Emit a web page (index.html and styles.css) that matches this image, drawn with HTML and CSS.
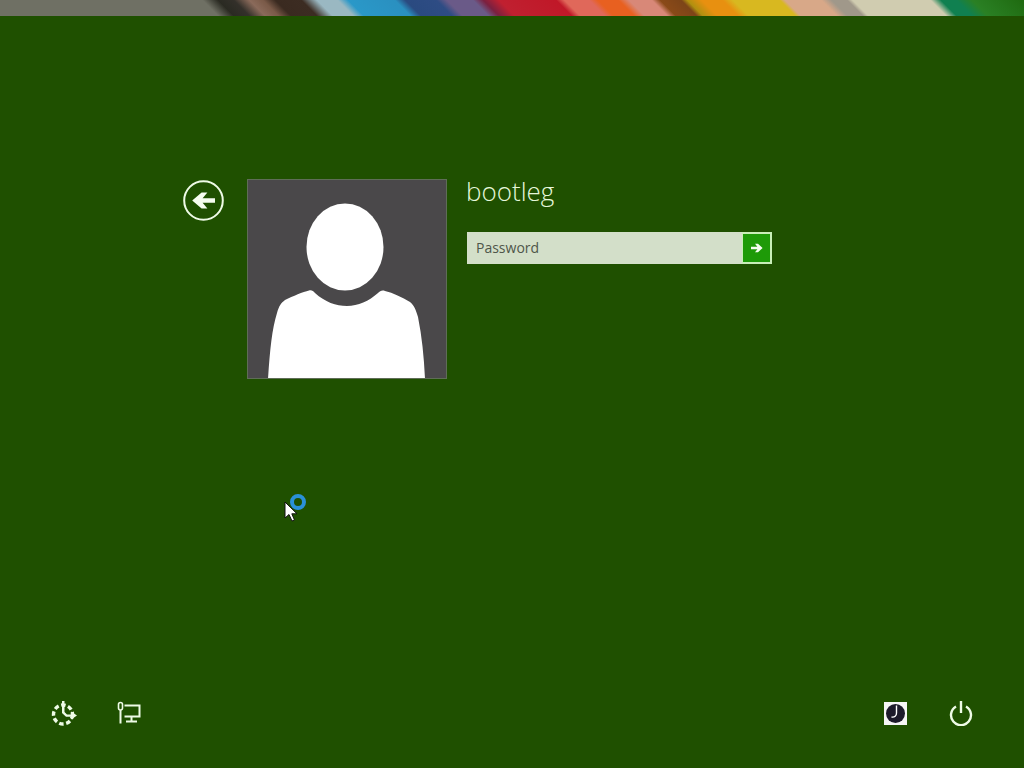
FILE: index.html
```html
<!DOCTYPE html>
<html lang="en">
<head>
    <meta charset="UTF-8">
    <meta name="viewport" content="width=device-width, initial-scale=1.0">
    <title>Sign in</title>
    <link rel="stylesheet" href="styles.css">
</head>
<body>
    <div class="screen">
        <div class="color-strip"></div>

        <div class="login">
            <button class="back-btn" aria-label="Back">
                <svg width="41" height="41" viewBox="0 0 41 41">
                    <circle cx="20.5" cy="20.5" r="19.3" fill="none" stroke="#eefbe6" stroke-width="2"/>
                    <path d="M32 18.3H19.6L24.4 12.6H18.6L9.2 20.6L18.6 28.6H24.4L19.6 22.8H32Z" fill="#f6fdf0"/>
                </svg>
            </button>

            <div class="user-tile">
                <svg width="198" height="198" viewBox="1 1 198 198">
                    <ellipse cx="98" cy="68" rx="38.5" ry="43.5" fill="#fff"/>
                    <path d="M21 200C23 170 25 150 30 134C32 127 34 124 38 121C46 117 56 113 62 111.500C65 111 66 112 68 114C78 123 89 127 100 127C111 127 122 122 131 114C133 112 135 111 138 112C146 114 155 118 163 123C167 126 169 131 171 138C175 158 177 178 178 200Z" fill="#fff"/>
                </svg>
            </div>

            <div class="user-form">
                <div class="user-name">bootleg</div>
                <div class="password-box">
                    <span class="password-hint">Password</span>
                    <button class="submit-btn" aria-label="Submit">
                        <svg width="14" height="12" viewBox="0 0 14 12">
                            <path d="M1 4.800H7.400L5 1.800H8L12.600 6L8 10.200H5L7.400 7.200H1Z" fill="#f4fdf0"/>
                        </svg>
                    </button>
                </div>
            </div>
        </div>

        <div class="footer">
            <div class="icon-group">
                <!-- ease of access -->
                <svg class="icon-ease" width="28" height="28" viewBox="0 0 28 28">
                    <circle cx="13" cy="15.500" r="9.500" fill="none" stroke="#eefbe6" stroke-width="3.400" stroke-dasharray="4.500 2.600"/>
                    <path d="M12 2H14.500V13L17 15.500H21V12.500L27 16.500L21 20.500V17.800H16L12 14Z" fill="#eefbe6"/>
                </svg>
                <!-- network -->
                <svg class="icon-network" width="24" height="24" viewBox="0 0 24 24">
                    <rect x="1.500" y="1.500" width="4" height="7.500" rx="2" fill="none" stroke="#eefbe6" stroke-width="1.600"/>
                    <path d="M3.500 9V22.500" stroke="#eefbe6" stroke-width="2" fill="none"/>
                    <path d="M7.500 4.500H22.500V15.500H7.500M14.500 15.500V20M9 20.500H20" stroke="#eefbe6" stroke-width="2" fill="none"/>
                </svg>
            </div>
            <div class="icon-group icon-group-right">
                <!-- language / input -->
                <div class="lang-badge">
                    <div class="lang-disc">
                        <svg width="16" height="16" viewBox="0 0 16 16">
                            <path d="M10.500 1.500V9C10.500 12 8.500 13.500 5.500 13" fill="none" stroke="#fff" stroke-width="1.400"/>
                        </svg>
                    </div>
                </div>
                <!-- power -->
                <svg class="icon-power" width="26" height="26" viewBox="0 0 26 26">
                    <path d="M8 6.500A10 10 0 1 0 18 6.500" fill="none" stroke="#eefbe6" stroke-width="2.400"/>
                    <path d="M13 1V13" stroke="#eefbe6" stroke-width="2.400" fill="none"/>
                </svg>
            </div>
        </div>

        <!-- busy pointer on top of everything -->
        <div class="pointer">
            <svg width="14" height="21" viewBox="0 0 14 21">
                <path d="M1 1V17L5 13.500L8 20L10.500 19L7.800 12.800H13Z" fill="#fff" stroke="#111" stroke-width="1"/>
            </svg>
        </div>
        <div class="busy-ring"></div>
    </div>
</body>
</html>
```

FILE: styles.css
```css
* {
    box-sizing: border-box;
}

body {
    margin: 0;
    background: #1f5000;
    font-family: "Open Sans", "Noto Sans", sans-serif;
}

button {
    padding: 0;
    border: none;
    background: none;
}

svg {
    display: block;
}

.screen {
    position: relative;
    width: 1024px;
    height: 768px;
    overflow: hidden;
    display: flex;
    flex-direction: column;
}

.color-strip {
    height: 16px;
    flex-shrink: 0;
    filter: blur(0.6px);
    background: linear-gradient(45deg,
        #6f7064 0%, #6f7064 21%, #2a2a22 22.500%, #33302a 24%, #8a6a5a 25.500%, #7a5a48 26.800%,
        #3a2a20 28%, #3c2c22 30.500%, #9ab8c2 32%, #9ab8c2 34%, #2a98c8 35%, #2a90c0 39.500%,
        #2a4a80 40.500%, #2e4c84 43.500%, #6a5a88 44.500%, #6a5a88 47%, #7a2040 48%, #c02030 49.500%,
        #c01828 55%, #e0685a 55.800%, #e0685a 58.200%, #e86020 59%, #e86020 61%, #d88878 62%,
        #d88878 64.200%, #8a4a18 65%, #7c4418 67%, #b09010 67.600%, #e89010 69%, #e89010 71%,
        #d8b820 72%, #d8b820 76.500%, #d8a888 77%, #d8a888 80.500%, #a0988a 81.500%, #a0988a 83%,
        #d0ccb0 83.500%, #d0ccb0 91%, #108050 92%, #108050 93.500%, #2a8024 95%, #1f6a10 100%);
}

.login {
    display: flex;
    align-items: flex-start;
    padding: 163px 0 0 183px;
}

.back-btn {
    width: 41px;
    height: 41px;
    margin-top: 1px;
    margin-right: 23px;
}

.user-tile {
    width: 200px;
    height: 200px;
    border: 1px solid #5f6d57;
    background: #4a484a;
    overflow: hidden;
}

.user-form {
    margin-left: 20px;
}

.user-name {
    height: 53px;
    margin-left: -1px;
    font-size: 26px;
    font-weight: 300;
    line-height: 24px;
    color: #e6f7da;
}

.password-box {
    display: flex;
    align-items: stretch;
    justify-content: space-between;
    width: 305px;
    height: 32px;
    background: #d3dfc9;
}

.password-hint {
    padding-left: 9px;
    font-size: 14px;
    line-height: 32px;
    color: #4f564a;
}

.submit-btn {
    width: 30px;
    display: flex;
    align-items: center;
    justify-content: center;
    background: #1e9a08;
    border: 2px solid #c9eeb8;
    border-left-width: 1px;
}

.footer {
    display: flex;
    justify-content: space-between;
    align-items: center;
    margin-top: auto;
    padding: 0 50px 32px;
    height: 78px;
}

.icon-group {
    display: flex;
    align-items: center;
    gap: 39px;
}

.icon-group-right {
    gap: 41px;
}

.lang-badge {
    width: 23px;
    height: 23px;
    padding: 2px;
    background: #f6f6f6;
}

.lang-disc {
    width: 19px;
    height: 19px;
    border-radius: 50%;
    background: #1c1a2a;
    overflow: hidden;
}

.pointer {
    position: absolute;
    left: 284px;
    top: 501px;
}

.busy-ring {
    position: absolute;
    left: 290px;
    top: 494px;
    width: 16px;
    height: 16px;
    border-radius: 50%;
    border: 4px solid #2a90d8;
    background: #1f5000;
}
```
